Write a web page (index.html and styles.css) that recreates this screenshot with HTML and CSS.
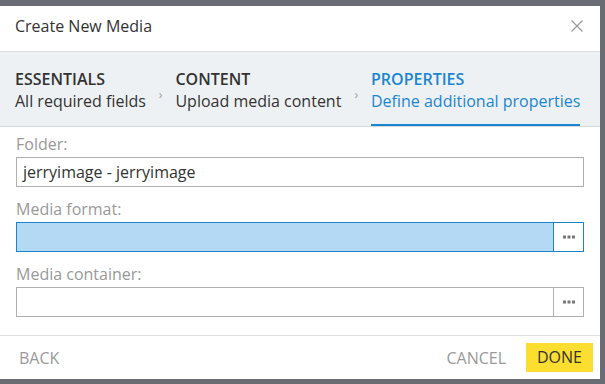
FILE: index.html
```html
<!DOCTYPE html>
<html>
	<head>
		<meta charset="UTF-8">
		<title>Create New Media</title>
		<link rel="stylesheet" href="styles.css">
	</head>
	<body>
		<div class="dialog">
			<div class="dlg-head">
				<span class="dlg-title">Create New Media</span>
				<span class="dlg-close">
					<svg width="12" height="12" viewBox="0 0 12 12"><path d="M0.5 0.5L11.5 11.5M11.5 0.5L0.5 11.5" stroke="#999" stroke-width="1.2" fill="none"/></svg>
				</span>
			</div>
			<ul class="steps">
				<li class="step">
					<div class="step-name">ESSENTIALS</div>
					<div class="step-desc">All required fields</div>
				</li>
				<li class="sep">&rsaquo;</li>
				<li class="step">
					<div class="step-name">CONTENT</div>
					<div class="step-desc">Upload media content</div>
				</li>
				<li class="sep">&rsaquo;</li>
				<li class="step active">
					<div class="step-name">PROPERTIES</div>
					<div class="step-desc">Define additional properties</div>
				</li>
			</ul>
			<div class="form">
				<div class="field">
					<label>Folder:</label>
					<div class="box"><div class="inp">jerryimage - jerryimage</div></div>
				</div>
				<div class="field">
					<label>Media format:</label>
					<div class="box focus"><div class="inp"></div><div class="more"><svg width="12" height="4" viewBox="0 0 12 4"><rect x="0" y="0.5" width="3" height="3" fill="#777"/><rect x="4.5" y="0.5" width="3" height="3" fill="#777"/><rect x="9" y="0.5" width="3" height="3" fill="#777"/></svg></div></div>
				</div>
				<div class="field">
					<label>Media container:</label>
					<div class="box"><div class="inp"></div><div class="more"><svg width="12" height="4" viewBox="0 0 12 4"><rect x="0" y="0.5" width="3" height="3" fill="#777"/><rect x="4.5" y="0.5" width="3" height="3" fill="#777"/><rect x="9" y="0.5" width="3" height="3" fill="#777"/></svg></div></div>
				</div>
			</div>
			<div class="dlg-foot">
				<span class="btn back">BACK</span>
				<span class="right">
					<span class="btn">CANCEL</span>
					<span class="btn done">DONE</span>
				</span>
			</div>
		</div>
	</body>
</html>
```
FILE: styles.css
```css
html, body {
	margin: 0;
	padding: 0;
	background: #696d73;
	font-family: "Open Sans", "Liberation Sans", sans-serif;
}
ul, li {
	padding: 0;
	margin: 0;
	list-style: none;
}
.dialog {
	margin-top: 6px;
	width: 600px;
	height: 373px;
	background: #fff;
	display: flex;
	flex-direction: column;
}
.dlg-head {
	display: flex;
	align-items: center;
	justify-content: space-between;
	padding: 0 17px 6px 15px;
	box-sizing: border-box;
	height: 46px;
	border-bottom: 1px solid #dcdfe2;
}
.dlg-title {
	font-size: 16px;
	color: #333;
}
.dlg-close {
	display: flex;
}
.steps {
	height: 75px;
	background: #eef1f4;
	border-bottom: 1px solid #d6d9dc;
	display: flex;
	padding-left: 15px;
	box-sizing: border-box;
}
.step {
	padding-top: 17px;
	color: #333;
	box-sizing: border-box;
}
.step-name {
	font-size: 16px;
	font-weight: 600;
	line-height: 21px;
}
.step-desc {
	font-size: 16px;
	line-height: 22px;
}
.step.active {
	color: #1a86d0;
	border-bottom: 2px solid #1a86d0;
}
.sep {
	padding: 34px 13px 0 13px;
	font-size: 12px;
	color: #999;
}
.form {
	padding: 6px 16px 0 16px;
	flex: 1;
}
.field label {
	display: block;
	font-size: 16px;
	color: #999;
	line-height: 22px;
	margin-bottom: 2px;
}
.field {
	margin-bottom: 11px;
}
.box {
	display: flex;
	height: 30px;
	border: 1px solid #b0b0b0;
	box-sizing: border-box;
}
.inp {
	flex: 1;
	padding-left: 6px;
	font-size: 16px;
	line-height: 28px;
	color: #333;
}
.more {
	width: 29px;
	border-left: 1px solid #b0b0b0;
	display: flex;
	align-items: center;
	justify-content: center;
	background: #fff;
}
.box.focus {
	border-color: #1a84cf;
}
.box.focus .inp {
	background: #b3d9f4;
}
.box.focus .more {
	border-left-color: #1a84cf;
}
.dlg-foot {
	height: 43px;
	border-top: 1px solid #dcdfe2;
	display: flex;
	align-items: center;
	justify-content: space-between;
	padding: 0 7px 0 19px;
}
.btn {
	font-size: 16px;
	color: #999;
}
.right {
	display: flex;
	align-items: center;
}
.right .btn {
	margin-left: 20px;
}
.done {
	background: #fbde2f;
	color: #333;
	padding: 0 11px;
	line-height: 29px;
}
```
